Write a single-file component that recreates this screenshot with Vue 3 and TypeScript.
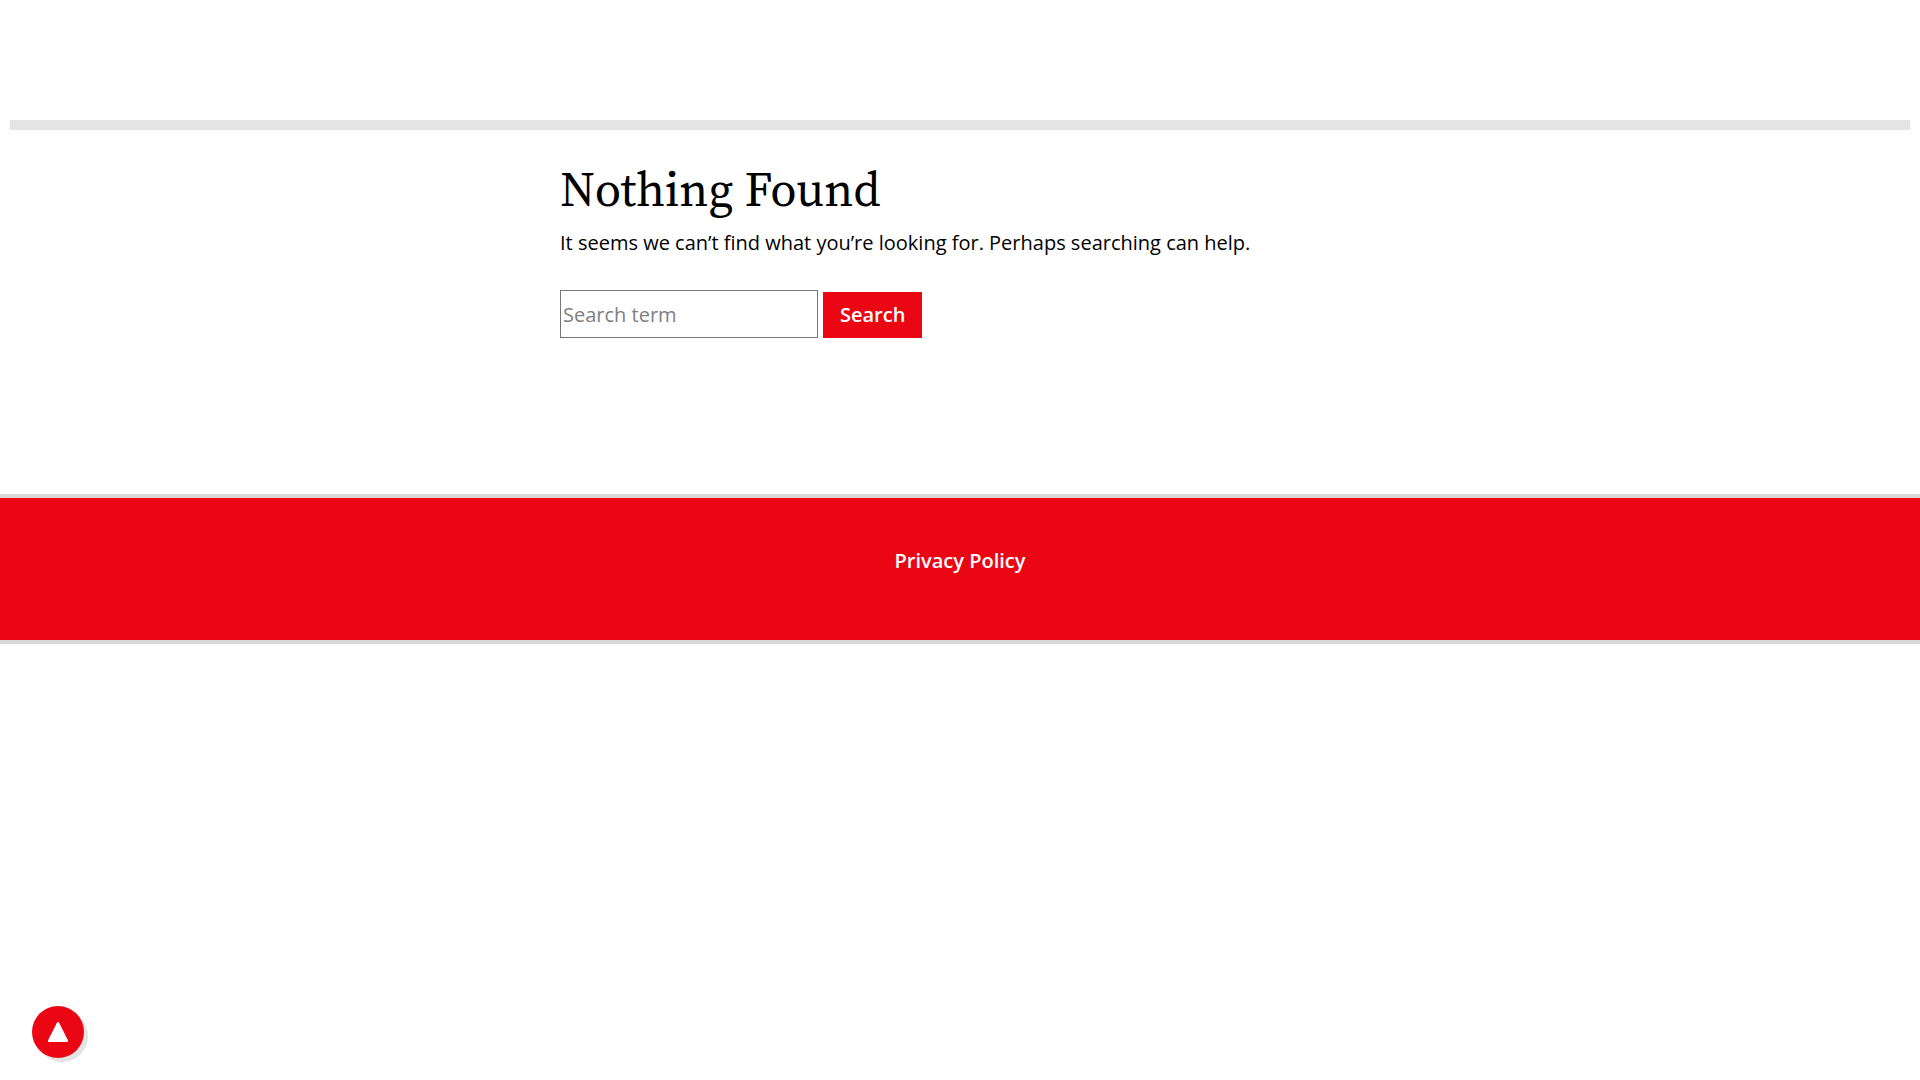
<script setup lang="ts">
import { ref } from 'vue'

const term = ref('')

function toTop(): void {
  window.scrollTo({ top: 0, behavior: 'smooth' })
}
</script>

<template>
  <div class="page">
    <header class="site-header"></header>
    <main class="content">
      <h1>Nothing Found</h1>
      <p>It seems we can’t find what you’re looking for. Perhaps searching can help.</p>
      <form class="search" role="search" @submit.prevent>
        <input v-model="term" type="search" placeholder="Search term" aria-label="Search term" />
        <button type="submit">Search</button>
      </form>
    </main>
    <footer class="site-footer">
      <a href="#">Privacy Policy</a>
    </footer>
    <button class="to-top" type="button" aria-label="Back to top" @click="toTop">
      <svg width="20" height="20" viewBox="0 0 20 20" aria-hidden="true">
        <path d="M8.9.7Q10-.7 11.1.7L19.8 18Q20.6 20 18.8 20H1.2Q-.6 20 .2 18Z" fill="#fff" />
      </svg>
    </button>
  </div>
</template>

<style>
body {
  background: #fff;
}
</style>

<style scoped>
.page {
  font-family: "Open Sans", sans-serif;
  font-size: 20px;
  line-height: 30px;
  color: #000;
}

.site-header {
  height: 120px;
  margin: 0 10px;
  border-bottom: 10px solid #e4e4e4;
}

.content {
  max-width: 800px;
  margin: 0 auto;
  padding: 30px 0 156px;
}

h1 {
  margin: 0;
  font-family: "Source Serif Pro", "Source Serif 4", "Liberation Serif", serif;
  font-size: 48px;
  line-height: 58px;
  font-weight: 400;
}

p {
  margin: 10px 0 32px;
}

.search {
  display: flex;
  align-items: flex-end;
  gap: 5px;
}

.search input {
  box-sizing: border-box;
  width: 258px;
  height: 48px;
  padding: 2px;
  border: 1px solid #767676;
  border-radius: 0;
  background: #fff;
  font: inherit;
  appearance: none;
}

.search input::placeholder {
  color: #808080;
}

.search button {
  padding: 8px 17px;
  border: 0;
  background: #eb0614;
  color: #fff;
  font: inherit;
  font-weight: 600;
  cursor: pointer;
}

.site-footer {
  padding: 48px 20px 64px;
  border: solid #d8d8d8;
  border-width: 4px 0;
  background: #eb0614;
  text-align: center;
}

.site-footer a {
  color: #fff;
  font-weight: 600;
  text-decoration: none;
}

.to-top {
  position: fixed;
  bottom: 22px;
  left: 32px;
  display: flex;
  align-items: center;
  justify-content: center;
  width: 52px;
  height: 52px;
  padding: 0;
  border: 0;
  border-radius: 50%;
  background: #eb0614;
  box-shadow: 4px 4px 0 #e4e4e4;
  cursor: pointer;
}
</style>
